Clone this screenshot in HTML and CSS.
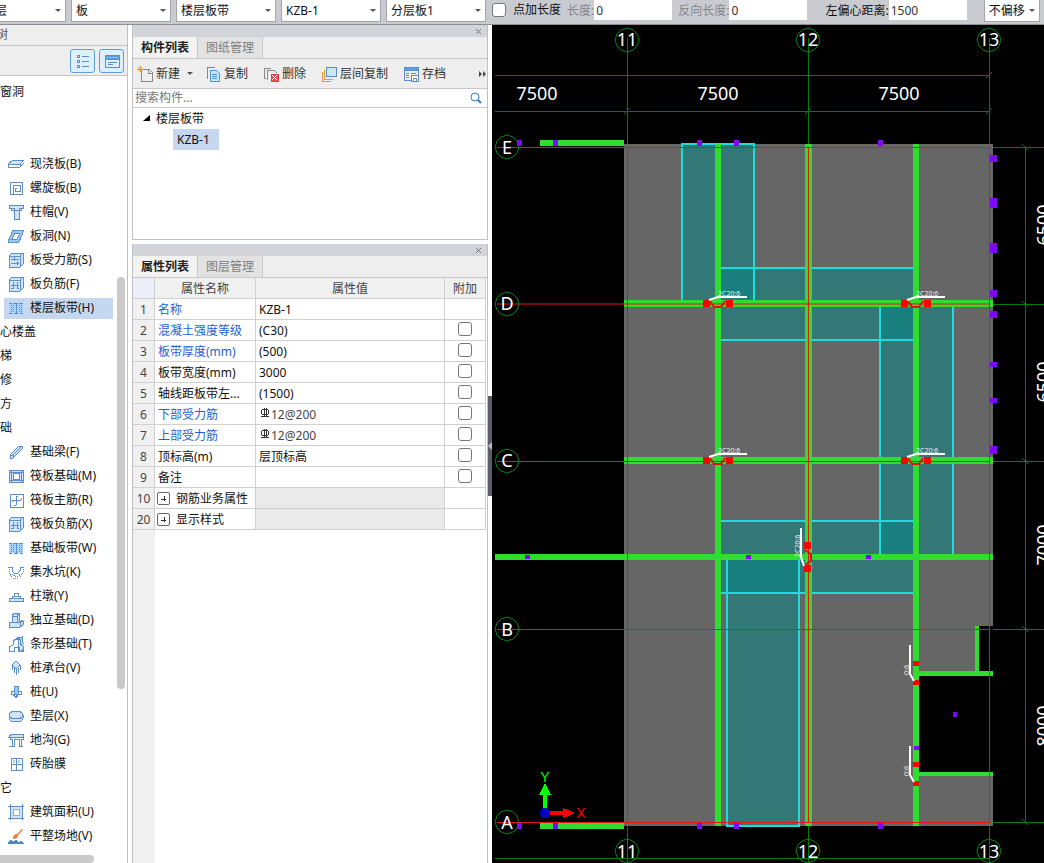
FILE: index.html
```
<!DOCTYPE html>
<html lang="zh-CN">
<head>
  <meta charset="utf-8">
  <meta name="viewport" content="width=device-width, initial-scale=1">
  <title>楼层板带</title>
  <link rel="stylesheet" href="styles.css">
</head>
<body>
  <header class="option-bar">
    <span class="combo combo-floor"><select aria-label="楼层"><option>层</option></select></span>
    <span class="combo"><select aria-label="构件类型"><option>板</option></select></span>
    <span class="combo"><select aria-label="构件"><option>楼层板带</option></select></span>
    <span class="combo"><select aria-label="名称"><option>KZB-1</option></select></span>
    <span class="combo"><select aria-label="分层"><option>分层板1</option></select></span>
    <label class="option-check"><input type="checkbox" class="box">点加长度</label>
    <label class="option-field muted">长度:<input type="text" value="0"></label>
    <label class="option-field muted">反向长度:<input type="text" value="0"></label>
    <label class="option-field offset-field">左偏心距离:<input type="text" value="1500"></label>
    <span class="combo combo-short"><select aria-label="偏移"><option>不偏移</option></select></span>
  </header>

  <main class="workspace">
    <aside class="nav">
      <div class="nav-title"><span>树</span></div>
      <div class="nav-tools">
        <button type="button" aria-label="列表"><svg width="16" height="16" viewBox="0 0 16 16"><path d="M2 2h2v2H2zM2 7h2v2H2zM2 12h2v2H2zM7 3h7M7 8h7M7 13h7"/></svg></button>
        <button type="button" aria-label="窗口"><svg width="16" height="16" viewBox="0 0 16 16"><path d="M1 2h14v12H1zM4 9h9M4 11h5"/><path class="solid" d="M1 2h14v4H1z"/><path class="light" d="M3 4h1M6 4h1M9 4h1M12 4h1"/></svg></button>
      </div>
      <div class="nav-body">
        <ul class="nav-list">
          <li class="group">窗洞</li>
          <li></li>
          <li></li>
          <li><a href="#"><svg class="ico" viewBox="0 0 16 16"><path class="fill" d="M0 8l5-4h11l-4 4z"/><path d="M0 8l5-4h11v3l-4 4H0zM0 8h12v3M12 8l4-4"/></svg>现浇板(B)</a></li>
          <li><a href="#"><svg class="ico" viewBox="0 0 16 16"><path d="M7 11h5V5H5v9M5 14H2V2h12v12H5M7 11V8h2"/></svg>螺旋板(B)</a></li>
          <li><a href="#"><svg class="ico" viewBox="0 0 16 16"><path class="fill" d="M1 1h14v3h-4v11H6V4H1z"/><path d="M3 4v2h10V4"/></svg>柱帽(V)</a></li>
          <li><a href="#"><svg class="ico" viewBox="0 0 16 16"><path class="fill deep" d="M5 2h11l-5 12H0z"/><path class="paper" d="M7 5h5l-3 6H4z"/></svg>板洞(N)</a></li>
          <li><a href="#"><svg class="ico" viewBox="0 0 16 16"><path class="fill" d="M1 4l3-3h11v11l-3 3H1z"/><path d="M1 4h11v11M12 4l3-3M3 7h8M3 11h8M6 5v4M9 9v4"/></svg>板受力筋(S)</a></li>
          <li><a href="#"><svg class="ico" viewBox="0 0 16 16"><path class="fill" d="M1 4l3-3h11v11l-3 3H1z"/><path d="M1 4h11v11M12 4l3-3M3 9h8M5 6v7M9 6v7M3 12h2M9 12h2"/></svg>板负筋(F)</a></li>
          <li class="selected"><a href="#"><svg class="ico" viewBox="0 0 16 16"><path class="soft" d="M1 3h14v10H1z"/><path d="M1 3h3M1 13h3M6 3h4M6 13h4M12 3h3M12 13h3M8 3v10"/><path class="dots" d="M3 3v10M5 3v10M11 3v10M13 3v10"/></svg>楼层板带(H)</a></li>
          <li class="group">心楼盖</li>
          <li class="group">梯</li>
          <li class="group">修</li>
          <li class="group">方</li>
          <li class="group">础</li>
          <li><a href="#"><svg class="ico" viewBox="0 0 16 16"><path class="fill" d="M2 11l9-9h3v3l-9 9H2z"/><path d="M2 11h3v3M5 11l9-9"/></svg>基础梁(F)</a></li>
          <li><a href="#"><svg class="ico" viewBox="0 0 16 16"><path class="fill" d="M1 2h14v12H1z"/><path class="paper" d="M5 5h6v6H5z"/><path d="M1 4h14M1 12h14M3 2v12M13 2v12"/></svg>筏板基础(M)</a></li>
          <li><a href="#"><svg class="ico" viewBox="0 0 16 16"><path d="M2 2h13v13H2zM8 4v9M4 8h9M8 4h2M8 13H6M4 8v2M13 8V6"/></svg>筏板主筋(R)</a></li>
          <li><a href="#"><svg class="ico" viewBox="0 0 16 16"><path class="fill" d="M1 4l3-3h11v11l-3 3H1z"/><path d="M1 4h11v11M12 4l3-3M3 9h8M5 6v7M9 6v7M3 12h2M9 12h2"/></svg>筏板负筋(X)</a></li>
          <li><a href="#"><svg class="ico" viewBox="0 0 16 16"><path class="soft" d="M1 3h14v10H1z"/><path d="M1 3h3M1 13h3M6 3h4M6 13h4M12 3h3M12 13h3M8 3v10"/><path class="dots" d="M3 3v10M5 3v10M11 3v10M13 3v10"/></svg>基础板带(W)</a></li>
          <li><a href="#"><svg class="ico" viewBox="0 0 16 16"><path d="M0 3h4v4l2 2h4l2-2V3h4"/><path class="dots" d="M1 5v4l4 5h6l4-5V5M4 10l3 2h3l3-2"/></svg>集水坑(K)</a></li>
          <li><a href="#"><svg class="ico" viewBox="0 0 16 16"><path class="fill" d="M1 10h14v3H1z"/><path d="M4 10V8h8v2M6 8V5h4v3"/></svg>柱墩(Y)</a></li>
          <li><a href="#"><svg class="ico" viewBox="0 0 16 16"><path class="fill" d="M4 4l2-3h5v8h4v4l-3 2H1v-5h3z"/><path d="M4 4h5v6h3v5M1 10h11l3-2M9 4l2-3M4 4v6"/></svg>独立基础(D)</a></li>
          <li><a href="#"><svg class="ico" viewBox="0 0 16 16"><path class="fill" d="M10 3l4-2v5l2 2v5l-3 2h-3z"/><path d="M1 15v-4l4-2V5l3-2h4v5l3 2v5h-4v-4H6v4zM8 3l3-2h3"/></svg>条形基础(T)</a></li>
          <li><a href="#"><svg class="ico" viewBox="0 0 16 16"><path class="fill" d="M8 1l4 4-4 4-4-4z"/><path d="M4 5v5M12 5v5M8 9v6M6 8v5M10 8v5"/></svg>桩承台(V)</a></li>
          <li><a href="#"><svg class="ico" viewBox="0 0 16 16"><path class="fill deep" d="M6 2h4v8H6z"/><path d="M6 7H3v3h2l3 4 3-4h2V7h-3M6 10h4M8 10v4"/></svg>桩(U)</a></li>
          <li><a href="#"><svg class="ico" viewBox="0 0 16 16"><path class="fill" d="M1 7v3c0 5 14 5 14 0V7"/><ellipse class="fill" cx="8" cy="7" rx="7" ry="4"/></svg>垫层(X)</a></li>
          <li><a href="#"><svg class="ico" viewBox="0 0 16 16"><path class="fill" d="M1 5l2-3h12v3z"/><path d="M2 5v2h2v7h2V7h5v7h2V7h2V5M1 14h5M11 14h4"/></svg>地沟(G)</a></li>
          <li><a href="#"><svg class="ico" viewBox="0 0 16 16"><path class="soft" d="M5 4h2v3H5zM10 4h2v3h-2z"/><path d="M3 2h11v12H3zM3 8h11M8 2v12"/></svg>砖胎膜</a></li>
          <li class="group">它</li>
          <li><a href="#"><svg class="ico" viewBox="0 0 16 16"><path class="fill" d="M2 2h12v12H2z"/><path class="paper grey" d="M5 5h6v6H5z"/><path d="M0 2h3M2 0v3M13 2h3M14 0v3M0 14h3M2 13v3M13 14h3M14 13v3"/></svg>建筑面积(U)</a></li>
          <li><a href="#"><svg class="ico" viewBox="0 0 16 16"><path class="orange" d="M5 11c0-4 2-5 4-5l5-5 1 1-5 5c0 3-2 4-5 4z"/><path class="earth" d="M0 16v-2l3-2 2 1 3-1 3 2 2-1 3 2v1z"/></svg>平整场地(V)</a></li>
        </ul>
        <div class="vtrack"><div class="vthumb"></div></div>
      </div>
      <div class="hthumb"></div>
    </aside>

    <div class="docks">
      <section class="panel components">
        <div class="panel-bar"><button type="button" aria-label="关闭"><svg width="7" height="7" viewBox="0 0 7 7"><path d="M1 1l5 5M6 1L1 6"/></svg></button></div>
        <nav class="tabs"><button type="button" class="active">构件列表</button><button type="button">图纸管理</button></nav>
        <div class="tools">
          <button type="button"><svg class="ico" viewBox="0 0 16 16"><path class="page" d="M4 3h8l3 3v9H4z"/><path class="page" d="M11 3v4h4"/><path class="spark" d="M0 3h6M3 0v6M1 1l4 4M5 1L1 5"/></svg>新建<i class="caret"></i></button>
          <button type="button"><svg class="ico" viewBox="0 0 16 16"><path d="M3 12H2V1h7v1"/><path class="fill" d="M5 4h6l3 3v8H5z"/><path d="M7 8h5M7 10h5M7 12h5"/></svg>复制</button>
          <button type="button"><svg class="ico" viewBox="0 0 16 16"><path class="page" d="M3 12H1V2h7M4 14V4h7l3 3"/><path class="red" d="M8 8h7v7H8z"/><path class="cross" d="M9 9l5 5M14 9l-5 5"/></svg>删除</button>
          <button type="button"><svg class="ico" viewBox="0 0 16 16"><path class="spark" d="M1 6v9h9M3 4v9h9"/><path class="fill" d="M5 1h10v9H5z"/></svg>层间复制</button>
          <button type="button"><svg class="ico" viewBox="0 0 16 16"><path d="M1 2h14v12H1zM3 7h3M3 9h3M3 11h3M8 7h5"/><path class="solid" d="M1 1h14v3H1z"/><path class="paper" d="M8 9h7v6H8z"/><path class="page" d="M10 15v-3h3v3"/></svg>存档</button>
          <button type="button" class="more" aria-label="更多"><svg width="9" height="6" viewBox="0 0 9 6"><path d="M1 0l3 3-3 3zM5 0l3 3-3 3z"/></svg></button>
        </div>
        <label class="search"><input type="search" placeholder="搜索构件..." aria-label="搜索构件"><svg width="12" height="12" viewBox="0 0 12 12"><circle cx="5" cy="5" r="4"/><path d="M8 8l3 3"/></svg></label>
        <ul class="tree">
          <li class="tree-root"><svg width="7" height="7" viewBox="0 0 7 7"><path d="M7 0v6H0z"/></svg>楼层板带</li>
          <li class="tree-leaf"><a href="#">KZB-1</a></li>
        </ul>
      </section>

      <section class="panel properties">
        <div class="panel-bar"><button type="button" aria-label="关闭"><svg width="7" height="7" viewBox="0 0 7 7"><path d="M1 1l5 5M6 1L1 6"/></svg></button></div>
        <nav class="tabs"><button type="button" class="active">属性列表</button><button type="button">图层管理</button></nav>
        <div class="table-area">
          <table>
            <colgroup><col class="c-num"><col class="c-name"><col><col class="c-extra"></colgroup>
            <thead><tr><th></th><th>属性名称</th><th>属性值</th><th>附加</th></tr></thead>
            <tbody>
              <tr><th>1</th><td class="key">名称</td><td>KZB-1</td><td></td></tr>
              <tr><th>2</th><td class="key">混凝土强度等级</td><td>(C30)</td><td><input type="checkbox" class="box" aria-label="附加 2"></td></tr>
              <tr><th>3</th><td class="key">板带厚度(mm)</td><td>(500)</td><td><input type="checkbox" class="box" aria-label="附加 3"></td></tr>
              <tr><th>4</th><td>板带宽度(mm)</td><td>3000</td><td><input type="checkbox" class="box" aria-label="附加 4"></td></tr>
              <tr><th>5</th><td>轴线距板带左...</td><td>(1500)</td><td><input type="checkbox" class="box" aria-label="附加 5"></td></tr>
              <tr><th>6</th><td class="key">下部受力筋</td><td class="rebar"><svg width="12" height="12" viewBox="0 0 12 12"><ellipse cx="6" cy="5" rx="4" ry="3"/><path d="M2 9h8M5 1v8M7 1v8"/></svg>12@200</td><td><input type="checkbox" class="box" aria-label="附加 6"></td></tr>
              <tr><th>7</th><td class="key">上部受力筋</td><td class="rebar"><svg width="12" height="12" viewBox="0 0 12 12"><ellipse cx="6" cy="5" rx="4" ry="3"/><path d="M2 9h8M5 1v8M7 1v8"/></svg>12@200</td><td><input type="checkbox" class="box" aria-label="附加 7"></td></tr>
              <tr><th>8</th><td>顶标高(m)</td><td>层顶标高</td><td><input type="checkbox" class="box" aria-label="附加 8"></td></tr>
              <tr><th>9</th><td>备注</td><td></td><td><input type="checkbox" class="box" aria-label="附加 9"></td></tr>
              <tr><th>10</th><td class="folded"><button type="button" aria-label="展开"><svg width="7" height="7" viewBox="0 0 7 7"><path d="M1 4h5M4 1v5"/></svg></button>钢筋业务属性</td><td class="blank"></td><td></td></tr>
              <tr><th>20</th><td class="folded"><button type="button" aria-label="展开"><svg width="7" height="7" viewBox="0 0 7 7"><path d="M1 4h5M4 1v5"/></svg></button>显示样式</td><td class="blank"></td><td></td></tr>
            </tbody>
          </table>
        </div>
      </section>
    </div>

    <div class="splitter"><button type="button" aria-label="收起"><svg width="4" height="8" viewBox="0 0 4 8"><path d="M4 0v8L0 4z"/></svg></button></div>

    <section class="drawing">
      <svg class="plan" viewBox="492 25 552 838" preserveAspectRatio="xMinYMin slice">
        <defs>
          <polygon id="bubble" points="0,-12 6,-10 10,-6 12,0 10,6 6,10 0,12 -6,10 -10,6 -12,0 -10,-6 -6,-10"/>
          <g id="hanger">
            <path class="mark" d="M-15-4h7v7h-7zM8-4h7v7H8z"/>
            <path class="mark-line" d="M-8-3l4 6H3l4-6"/>
            <path class="leader" d="M-9-4L0-7H29"/>
            <text class="note" x="0" y="-8">2C20:6</text>
          </g>
          <g id="hanger-side">
            <path class="mark" d="M-3-13h6v5h-6zM-3 6h6v5h-6z"/>
            <path class="leader" d="M-6-29V0l4 7"/>
            <text class="note" transform="translate(-7 1) rotate(-90)">0:6</text>
          </g>
        </defs>

        <!-- slab -->
        <path class="slab" d="M624 144h369v482h-14v46h-60v100h74v54H624z"/>
        <path class="void" d="M919 676h74v96h-74z"/>

        <!-- strips -->
        <g class="strip">
          <rect x="682" y="144" width="72" height="160"/>
          <rect x="718" y="267" width="198" height="73"/>
          <rect x="880" y="304" width="73" height="253"/>
          <rect x="718" y="521" width="198" height="72"/>
          <rect x="727" y="557" width="72" height="269"/>
        </g>
        <path class="strip-edge" d="M682 301V144h72v157M718 268h198M718 340h198M880 304v253M953 304v253M718 521h198M718 593h198M727 557v269h72V557"/>

        <!-- beams -->
        <path class="beam" d="M715 144h6v682h-6zM805 144h7v682h-7zM913 144h6v682h-6zM624 300h369v7H624zM624 457h369v7H624zM495 554h498v6H495zM540 140h84v6h-84zM540 823h84v6h-84zM975 626h4v46h-4zM919 671h74v5h-74zM919 772h74v4h-74z"/>

        <!-- dimension lines -->
        <path class="axis" d="M627 38v106M808 38v106M989 38v106M627 826v37M808 826v37M989 826v37M495 75h494M495 111h494M495 858h494M993 147h51M993 304h51M993 461h51M993 629h51M993 822h51M1025 147v675"/>
        <path class="tick" d="M624 114l6-6M805 114l6-6M986 114l6-6M986 78l6-6M1022 144l6 6M1022 301l6 6M1022 458l6 6M1022 626l6 6M1022 819l6 6"/>

        <!-- grid axes -->
        <g class="grid">
          <rect x="497" y="147" width="493" height="1"/>
          <rect class="faint" x="497" y="303" width="493" height="2"/>
          <rect x="497" y="461" width="493" height="1"/>
          <rect x="497" y="629" width="493" height="1"/>
          <rect x="497" y="822" width="493" height="1"/>
          <rect x="627" y="147" width="1" height="676"/>
          <rect x="808" y="147" width="1" height="676"/>
          <rect x="989" y="147" width="1" height="676"/>
        </g>

        <g class="bubbles">
          <use href="#bubble" x="627" y="40"/><use href="#bubble" x="808" y="40"/><use href="#bubble" x="989" y="40"/>
          <use href="#bubble" x="627" y="851"/><use href="#bubble" x="808" y="851"/><use href="#bubble" x="989" y="851"/>
          <use href="#bubble" x="507" y="147"/><use href="#bubble" x="507" y="304"/><use href="#bubble" x="507" y="461"/>
          <use href="#bubble" x="507" y="629"/><use href="#bubble" x="507" y="822"/>
        </g>
        <g class="label">
          <text x="627" y="46">11</text><text x="808" y="46">12</text><text x="989" y="46">13</text>
          <text x="627" y="858">11</text><text x="808" y="858">12</text><text x="989" y="858">13</text>
          <text x="507" y="154">E</text><text x="507" y="310">D</text><text x="507" y="467">C</text>
          <text x="507" y="636">B</text><text x="507" y="829">A</text>
          <text x="537" y="100">7500</text><text x="718" y="100">7500</text><text x="899" y="100">7500</text>
          <text transform="translate(1050 225) rotate(-90)">6500</text>
          <text transform="translate(1050 382) rotate(-90)">6500</text>
          <text transform="translate(1050 545) rotate(-90)">7000</text>
          <text transform="translate(1050 726) rotate(-90)">8000</text>
        </g>

        <!-- columns -->
        <path class="column" d="M517 140h5v6h-5zM553 140h5v6h-5zM697 140h5v6h-5zM734 140h5v6h-5zM878 140h5v6h-5zM990 155h7v7h-7zM990 198h7v10h-7zM990 243h7v10h-7zM990 290h7v7h-7zM990 311h7v7h-7zM990 362h7v5h-7zM990 398h7v5h-7zM990 446h7v8h-7zM525 555h5v4h-5zM746 555h5v4h-5zM866 555h5v4h-5zM953 712h4v5h-4zM914 746h5v4h-5zM517 823h5v6h-5zM553 823h5v6h-5zM697 823h5v6h-5zM734 823h5v6h-5zM878 823h5v6h-5z"/>

        <use href="#hanger" x="718" y="304"/>
        <use href="#hanger" x="916" y="304"/>
        <use href="#hanger" x="718" y="461"/>
        <use href="#hanger" x="916" y="461"/>
        <use href="#hanger" transform="translate(808 557) rotate(-90)"/>
        <use href="#hanger-side" x="916" y="674"/>
        <use href="#hanger-side" x="916" y="775"/>

        <!-- UCS icon -->
        <path class="ucs-y" d="M543 810V795h-4l6-12 6 12h-4v15z"/>
        <path class="ucs-x" d="M548 811h15v-3l12 5-12 5v-3h-15z"/>
        <circle class="ucs-o" cx="545" cy="813" r="5"/>
        <text class="ucs-y" x="545" y="782">Y</text>
        <text class="ucs-x" x="581" y="818">X</text>
      </svg>
    </section>
  </main>
</body>
</html>
```
FILE: styles.css
```
* {
  box-sizing: border-box;
}

body {
  margin: 0;
  height: 100vh;
  display: flex;
  flex-direction: column;
  overflow: hidden;
  font-family: "Noto Sans", "Noto Sans CJK SC", sans-serif;
  font-size: 12px;
  line-height: 20px;
  color: #111;
  background: #fff;
}

button, input, select {
  font: inherit;
  color: inherit;
  margin: 0;
  padding: 0;
  border: 0;
  border-radius: 0;
  background: none;
}

a {
  color: inherit;
  text-decoration: none;
}

ul {
  list-style: none;
  margin: 0;
  padding: 0;
}

svg {
  flex: none;
}

.box {
  appearance: none;
  width: 14px;
  height: 14px;
  border: 1px solid #777;
  border-radius: 3px;
  background: #fff;
}

/* option bar */
.option-bar {
  flex: none;
  display: flex;
  align-items: flex-start;
  height: 25px;
  background: #c9cbd0;
  border-bottom: 1px solid #8c8e94;
  overflow: hidden;
  white-space: nowrap;
}

.combo {
  position: relative;
  flex: none;
  width: 100px;
  height: 22px;
  margin-right: 5px;
  background: #fff;
  border: 1px solid #a3a5ab;
  border-top: 0;
}

.combo select {
  appearance: none;
  width: 100%;
  height: 21px;
  padding-left: 4px;
}

.combo::after {
  content: "";
  position: absolute;
  right: 4px;
  top: 9px;
  border: 3px solid transparent;
  border-top-color: #555;
  pointer-events: none;
}

.combo-floor {
  width: 76px;
  margin-left: -10px;
}

.combo-short {
  width: 56px;
  margin-left: 17px;
}

.option-check {
  display: flex;
  align-items: center;
  gap: 7px;
  height: 20px;
  margin-left: 1px;
}

.option-field {
  display: flex;
  height: 20px;
  margin-left: 6px;
  line-height: 21px;
}

.option-field input {
  width: 78px;
  height: 20px;
  padding-left: 2px;
  background: #fff;
  color: #333;
}

.muted {
  color: #85878c;
}

.offset-field {
  margin-left: 18px;
}

.workspace {
  flex: 1;
  display: flex;
  min-height: 0;
}

/* icons */
.ico {
  width: 16px;
  height: 16px;
}

.ico path, .ico ellipse, .nav-tools path {
  fill: none;
  stroke: #5a8fcb;
  stroke-width: 1px;
  shape-rendering: crispEdges;
}

.ico .fill { fill: #cfe4fa; }
.ico .deep { fill: #9cc6f3; }
.ico .soft { fill: #a9d2fa; stroke: none; }
.ico .paper { fill: #fff; }
.ico .grey { stroke: #aaa; }
.ico .dots { stroke-dasharray: 1 1; }
.ico .orange { fill: #e8813a; stroke: none; shape-rendering: auto; }
.ico .earth { fill: #4d88c8; stroke: none; }
.ico .page { stroke: #888; }
.ico .spark { stroke: #e79a3c; }
.ico .red { fill: #d75a5a; stroke: #c44; }
.ico .cross { stroke: #fff; }
.ico .solid, .nav-tools .solid { fill: #5a9fe0; }
.nav-tools .light { stroke: #fff; }

/* component navigator */
.nav {
  flex: none;
  display: flex;
  flex-direction: column;
  width: 128px;
  border-right: 1px solid #c0c0c4;
}

.nav-title {
  height: 21px;
  line-height: 20px;
  color: #555;
  background: #eee;
  border-bottom: 1px solid #c4c4c8;
  overflow: hidden;
}

.nav-title span {
  margin-left: -4px;
}

.nav-tools {
  display: flex;
  justify-content: flex-end;
  align-items: center;
  gap: 4px;
  height: 30px;
  padding-right: 3px;
  background: #eee;
  border-bottom: 1px solid #c4c4c8;
}

.nav-tools button {
  display: grid;
  place-items: center;
  width: 25px;
  height: 24px;
  border: 1px solid #5b9fe0;
  border-radius: 3px;
  background: #e0effc;
}

.nav-body {
  flex: 1;
  display: flex;
  min-height: 0;
  overflow: hidden;
}

.nav-list {
  flex: 1;
  padding-top: 4px;
  white-space: nowrap;
}

.nav-list li {
  display: flex;
  height: 24px;
  align-items: center;
}

.nav-list a {
  flex: 1;
  display: flex;
  align-items: center;
  gap: 6px;
  height: 21px;
  margin: 0 4px;
  padding-left: 4px;
}

.nav-list .selected a {
  background: #c6d8ef;
}

.vtrack {
  flex: none;
  width: 10px;
  padding: 201px 2px 0 0;
}

.vthumb {
  height: 412px;
  border-radius: 4px;
  background: #c9c9c9;
}

.hthumb {
  flex: none;
  width: 94px;
  height: 8px;
  border-radius: 0 4px 4px 0;
  background: #c9c9c9;
}

/* docked panels */
.docks {
  flex: none;
  display: flex;
  flex-direction: column;
  gap: 4px;
  width: 356px;
  margin-left: 4px;
}

.panel {
  border: 1px solid #c0c0c4;
  border-top: 0;
}

.components {
  height: 215px;
}

.properties {
  flex: 1;
  display: flex;
  flex-direction: column;
  border-bottom: 0;
}

.panel-bar {
  display: flex;
  justify-content: flex-end;
  align-items: center;
  height: 12px;
  padding-right: 5px;
  background: #d3d4d9;
}

.panel-bar button {
  display: flex;
}

.panel-bar path {
  stroke: #777;
}

.tabs {
  display: flex;
  height: 22px;
  background: #eee;
  border-bottom: 1px solid #c8c8cc;
}

.tabs button {
  width: 65px;
  background: #e2e2e2;
  border-right: 1px solid #c8c8cc;
  color: #808080;
}

.tabs .active {
  background: #f2f2f2;
  color: #222;
  font-weight: bold;
}

.tools {
  display: flex;
  align-items: center;
  height: 30px;
  padding-left: 4px;
  gap: 15px;
  background: #eee;
  border-bottom: 1px solid #c8c8cc;
}

.tools button {
  display: flex;
  align-items: center;
  gap: 3px;
  color: #333;
  white-space: nowrap;
}

.caret {
  margin: 3px -3px 0 4px;
  border: 3px solid transparent;
  border-top-color: #555;
}

.tools .more {
  margin-left: auto;
}

.more path {
  fill: #444;
}

.search {
  display: flex;
  align-items: center;
  height: 19px;
  padding: 0 5px 0 2px;
  border-bottom: 1px solid #c8c8cc;
}

.search input {
  flex: 1;
  height: 18px;
  outline: 0;
}

.search input::placeholder {
  color: #777;
}

.search svg {
  fill: none;
  stroke: #2f7cc0;
}

.search path {
  stroke-width: 2px;
}

.tree li {
  display: flex;
  align-items: center;
  height: 21px;
}

.tree-root {
  gap: 6px;
  padding-left: 10px;
}

.tree-leaf {
  padding-left: 40px;
}

.tree-leaf a {
  padding: 0 9px 0 4px;
  line-height: 21px;
  background: #c6d8ef;
}

/* property table */
.table-area {
  flex: 1;
  background: linear-gradient(to right, #f0f0f0 22px, #fff 22px);
}

table {
  width: 353px;
  table-layout: fixed;
  border-spacing: 0;
}

.c-num { width: 22px; }
.c-name { width: 101px; }
.c-extra { width: 41px; }

th, td {
  height: 21px;
  padding: 2px 3px 0;
  line-height: 18px;
  border-right: 1px solid #d0d0d0;
  border-bottom: 1px solid #d0d0d0;
  white-space: nowrap;
  overflow: hidden;
}

th {
  padding: 2px 0 0;
  background: #f0f0f0;
  color: #444;
  font-weight: normal;
}

thead th:first-child {
  background: #ebf0f8;
}

.key {
  color: #1f5fd6;
}

td .box {
  display: block;
  margin: 0 auto 4px;
}

.rebar {
  color: #444;
}

.rebar svg {
  vertical-align: 0;
}

.rebar path, .rebar ellipse, .folded path {
  fill: none;
  stroke: #333;
  shape-rendering: crispEdges;
}

.folded {
  padding-left: 2px;
}

.folded button {
  display: inline-grid;
  place-items: center;
  width: 13px;
  height: 13px;
  margin-right: 6px;
  border: 1px solid #666;
  border-radius: 2px;
  vertical-align: 1px;
}

.blank {
  background: #eaeaea;
}

.splitter {
  flex: none;
  display: flex;
  align-items: center;
  width: 4px;
  padding-top: 4px;
}

.splitter button {
  display: grid;
  place-items: center;
  width: 4px;
  height: 100px;
  background: #5c5f6b;
}

.splitter path {
  fill: #b8bac4;
}

/* drawing area */
.drawing {
  flex: 1;
  min-width: 0;
  background: #000;
}

.plan {
  display: block;
  width: 100%;
  height: 100%;
}

.plan path, .plan rect {
  shape-rendering: crispEdges;
}

.slab { fill: #666; }
.void { fill: #000; }
.strip rect { fill: #088; fill-opacity: 0.5; }
.strip-edge { fill: none; stroke: #1cdcdc; stroke-width: 2px; }
.beam { fill: #30dc30; }
.axis { fill: none; stroke: #007c10; }
.plan .tick { fill: none; stroke: #007c10; shape-rendering: auto; }
.grid { fill: #e81414; }
.grid .faint { fill-opacity: 0.5; }
.bubbles { fill: none; stroke: #008414; }
.column { fill: #7d0af5; }
.mark { fill: #f00; }

.plan .mark-line {
  fill: none;
  stroke: #e01010;
  stroke-width: 2px;
  shape-rendering: auto;
}

.plan .leader {
  fill: none;
  stroke: #fff;
  stroke-width: 2px;
  shape-rendering: auto;
}

.note {
  fill: #eee;
  font-size: 7px;
}

.label {
  fill: #fff;
  font-size: 18px;
  text-anchor: middle;
}

.ucs-x { fill: #f00; }
.ucs-y { fill: #0f0; }
.ucs-o { fill: #00c; }

text.ucs-x, text.ucs-y {
  font-family: "Liberation Sans", sans-serif;
  font-size: 14px;
  text-anchor: middle;
}
```
